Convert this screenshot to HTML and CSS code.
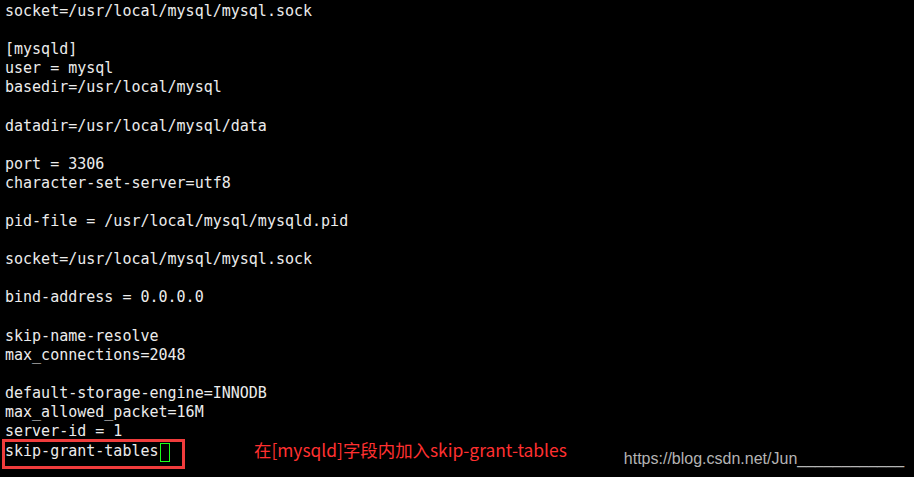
FILE: index.html
```html
<!DOCTYPE html>
<html lang="zh-CN">
<head>
  <meta charset="UTF-8">
  <title>my.cnf</title>
  <link rel="stylesheet" href="styles.css">
</head>
<body>
  <pre class="term">socket=/usr/local/mysql/mysql.sock

[mysqld]
user = mysql
basedir=/usr/local/mysql

datadir=/usr/local/mysql/data

port = 3306
character-set-server=utf8

pid-file = /usr/local/mysql/mysqld.pid

socket=/usr/local/mysql/mysql.sock

bind-address = 0.0.0.0

skip-name-resolve
max_connections=2048

default-storage-engine=INNODB
max_allowed_packet=16M
server-id = 1</pre>
  <div class="last-row">
    <div class="boxed"><span class="term-line">skip-grant-tables</span><span class="cursor"></span></div>
    <span class="note">在[mysqld]字段内加入skip-grant-tables</span>
    <span class="watermark">https://blog.csdn.net/Jun____________</span>
  </div>
</body>
</html>
```

FILE: styles.css
```css
html, body {
  margin: 0;
  background: #000;
}
body {
  padding: 2px 0 0 5px;
  height: 475px;
  overflow: hidden;
}
.term, .term-line {
  font-family: "DejaVu Sans Mono", monospace;
  font-size: 15px;
  line-height: 19.1px;
  color: #ececec;
}
.term {
  margin: 0;
  white-space: pre;
}
.last-row {
  display: flex;
  align-items: flex-start;
  margin-top: -2px;
}
.boxed {
  display: flex;
  align-items: flex-start;
  margin-left: -3px;
  border: 3px solid #f03c3c;
  width: 177px;
  height: 24px;
  box-sizing: content-box;
}
.cursor {
  display: inline-block;
  width: 8px;
  height: 17px;
  margin-top: 1px;
  margin-left: 1px;
  border: 1px solid #1bff1b;
}
.note {
  margin-left: 69px;
  margin-top: -1px;
  font-family: "Noto Sans CJK SC", sans-serif;
  font-size: 17.4px;
  line-height: 24px;
  color: #ff3030;
}
.watermark {
  margin-left: 57px;
  margin-top: 10px;
  font-family: "Liberation Sans", Arial, sans-serif;
  font-size: 16px;
  line-height: 20px;
  color: #b4b4b4;
}
```
